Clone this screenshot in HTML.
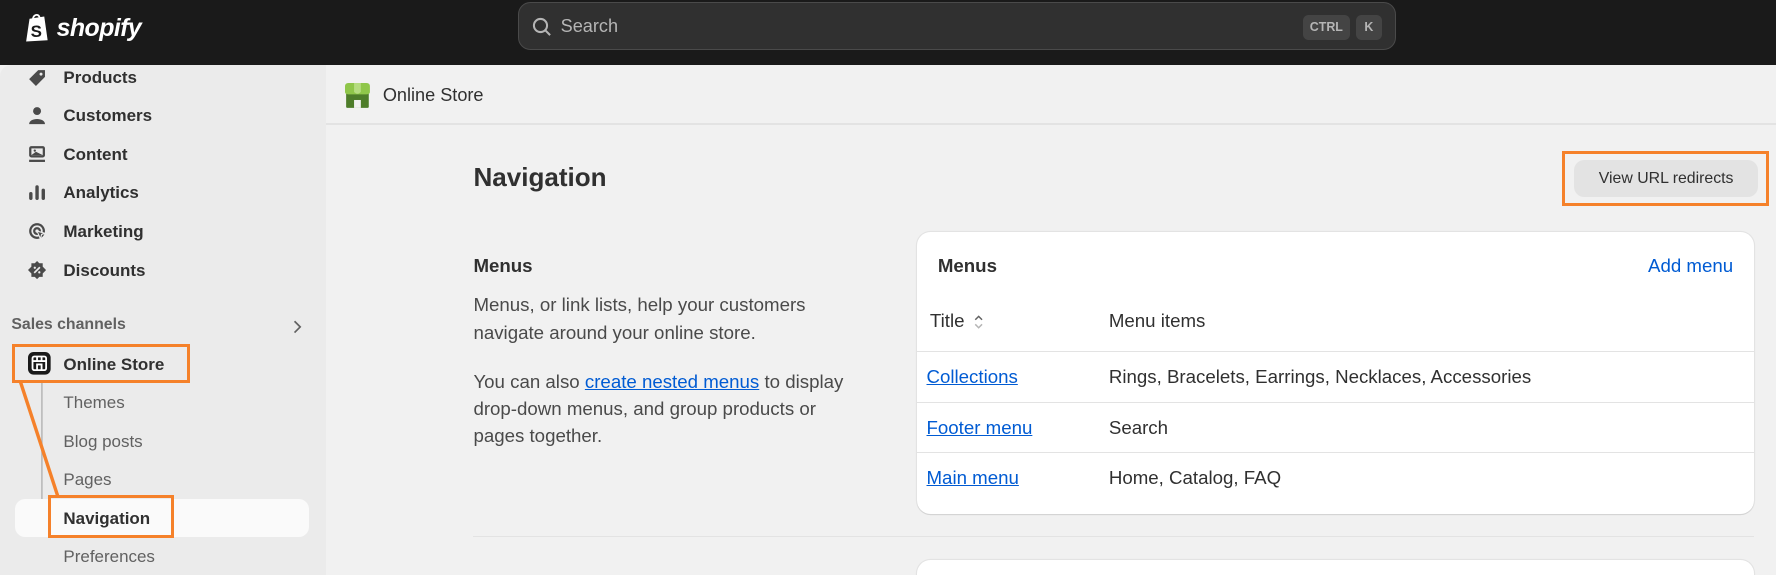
<!DOCTYPE html>
<html><head><meta charset="utf-8"><style>
html,body{margin:0;padding:0;width:1776px;height:575px;overflow:hidden;background:#f1f1f1}
#w{zoom:1.13265;width:1568px;height:508px;position:relative;overflow:hidden;font-family:"Liberation Sans",sans-serif;color:#303030}
.a{position:absolute;white-space:nowrap}
.top{left:0;top:0;width:1568px;height:57px;background:#1a1a1a}
.side{left:0;top:57px;width:288px;height:451px;background:#ebebeb;border-top-left-radius:10px}
.it{font-size:15px;font-weight:bold;color:#303030;left:56px}
.sub{font-size:15px;color:#616161;left:56px}
.ico{left:25px;width:16px;height:16px}
.ob{border:3px solid #f5812a;box-sizing:border-box}
.p{font-size:16.5px;color:#4a4a4a;left:418px}
a{color:#005bd3;text-decoration:underline}
.row{left:810px;width:739px;height:1px;background:#e3e3e3}
.cell{font-size:16.5px;color:#303030}
</style></head><body><div id="w">
<div class="a top"></div>
<svg class="a" style="left:22px;top:11px" width="22" height="27" viewBox="0 0 22 27"><path d="M4 6 L17 4 L20 25 L1 26 Z" fill="#fff"/><path d="M7 7 C7 2 12 1 13 5" stroke="#fff" stroke-width="1.6" fill="none"/><text x="5" y="22" font-size="15" font-weight="bold" fill="#1a1a1a" font-family="Liberation Sans">S</text></svg>
<div class="a" style="left:50px;top:12px;color:#fff;font-size:22px;font-weight:bold;font-style:italic;letter-spacing:-0.5px">shopify</div>
<div class="a" style="left:457px;top:2px;width:774px;height:40px;background:#303030;border:1px solid #4a4a4a;border-radius:11px"></div>
<svg class="a" style="left:470px;top:15px" width="18" height="18" viewBox="0 0 18 18"><circle cx="7.5" cy="7.5" r="5.8" stroke="#b5b5b5" stroke-width="1.8" fill="none"/><path d="M12 12 L16 16" stroke="#b5b5b5" stroke-width="1.8"/></svg>
<div class="a" style="left:495px;top:14px;font-size:16px;color:#b5b5b5">Search</div>
<div class="a" style="left:1150px;top:13px;width:42px;height:22px;background:#444;border-radius:5px;color:#b5b5b5;font-size:11px;font-weight:bold;text-align:center;line-height:22px">CTRL</div>
<div class="a" style="left:1197px;top:13px;width:23px;height:22px;background:#444;border-radius:5px;color:#b5b5b5;font-size:11px;font-weight:bold;text-align:center;line-height:22px">K</div>

<div class="a side"></div>
<svg class="a ico" style="top:61px" viewBox="0 0 16 16"><path d="M9 1 H15 V7 L7 15 L1 9 Z" fill="#4a4a4a" stroke-linejoin="round"/><circle cx="11.5" cy="4.5" r="1.3" fill="#ebebeb"/></svg>
<div class="a it" style="top:60px">Products</div>
<svg class="a ico" style="top:94px" viewBox="0 0 16 16"><circle cx="8" cy="4.5" r="3.5" fill="#4a4a4a"/><path d="M1 16 C1 10 15 10 15 16 Z" fill="#4a4a4a"/></svg>
<div class="a it" style="top:94px">Customers</div>
<svg class="a ico" style="top:128px" viewBox="0 0 16 16"><rect x="1" y="1" width="14" height="10" rx="2" fill="#4a4a4a"/><rect x="3" y="3" width="10" height="6" fill="#ebebeb"/><circle cx="6" cy="5" r="1" fill="#4a4a4a"/><path d="M3 9 L7 6 L13 9 Z" fill="#4a4a4a"/><rect x="1" y="13" width="14" height="2" fill="#4a4a4a"/></svg>
<div class="a it" style="top:128px">Content</div>
<svg class="a ico" style="top:162px" viewBox="0 0 16 16"><rect x="1" y="8" width="3" height="7" rx="1.5" fill="#4a4a4a"/><rect x="6.5" y="2" width="3" height="13" rx="1.5" fill="#4a4a4a"/><rect x="12" y="5" width="3" height="10" rx="1.5" fill="#4a4a4a"/></svg>
<div class="a it" style="top:162px">Analytics</div>
<svg class="a ico" style="top:196px" viewBox="0 0 16 16"><circle cx="8" cy="8" r="6" stroke="#4a4a4a" stroke-width="2" fill="none"/><circle cx="8" cy="8" r="2.5" stroke="#4a4a4a" stroke-width="2" fill="none"/><path d="M8 8 L15 10 L12 11 L11 15 Z" fill="#4a4a4a" stroke="#ebebeb" stroke-width="1"/></svg>
<div class="a it" style="top:196px">Marketing</div>
<svg class="a ico" style="top:230px" viewBox="0 0 16 16"><path d="M8 0 L10 2 L13 2 L13 5 L16 8 L13 11 L13 14 L10 14 L8 16 L6 14 L3 14 L3 11 L0 8 L3 5 L3 2 L6 2 Z" fill="#4a4a4a"/><path d="M5.5 10.5 L10.5 5.5" stroke="#ebebeb" stroke-width="1.5"/><circle cx="6" cy="6" r="1" fill="#ebebeb"/><circle cx="10" cy="10" r="1" fill="#ebebeb"/></svg>
<div class="a it" style="top:230px">Discounts</div>
<div class="a" style="left:10px;top:279px;font-size:14px;font-weight:bold;color:#616161">Sales channels</div>
<svg class="a" style="left:256px;top:282px" width="12" height="14" viewBox="0 0 12 14"><path d="M4 2 L9 7 L4 12" stroke="#616161" stroke-width="1.5" fill="none"/></svg>
<svg class="a" style="left:25px;top:311px" width="20" height="20" viewBox="0 0 20 20"><rect x="0" y="0" width="20" height="20" rx="5" fill="#1a1a1a"/><rect x="4" y="4" width="12" height="12" rx="1.5" stroke="#fff" stroke-width="1.6" fill="none"/><path d="M4 8 H16 M8 4 V8 M12 4 V8 M8 16 V11 H12 V16" stroke="#fff" stroke-width="1.6" fill="none"/></svg>
<div class="a it" style="top:313px">Online Store</div>
<svg class="a" style="left:0;top:300px" width="300" height="200"><path d="M37 37 V151 Q37 158 44 158 H48" stroke="#b5b5b5" stroke-width="1.3" fill="none"/></svg>
<div class="a" style="left:13px;top:441px;width:260px;height:33px;background:#fafafa;border-radius:9px"></div>
<div class="a sub" style="top:347px">Themes</div>
<div class="a sub" style="top:381px">Blog posts</div>
<div class="a sub" style="top:415px">Pages</div>
<div class="a it" style="top:449px">Navigation</div>
<div class="a sub" style="top:483px">Preferences</div>
<div class="a ob" style="left:11px;top:304px;width:157px;height:34px"></div>
<div class="a ob" style="left:42px;top:437px;width:112px;height:38px"></div>
<svg class="a" style="left:0;top:0" width="300" height="508"><path d="M18 337 L51 438" stroke="#f5812a" stroke-width="3"/></svg>

<svg class="a" style="left:305px;top:73px" width="22" height="23" viewBox="0 0 22 23"><rect x="1" y="7" width="20" height="15" rx="1" fill="#4e7d2a"/><path d="M0 3 Q0 0 3 0 H19 Q22 0 22 3 V8 Q22 10 19 10 H3 Q0 10 0 8 Z" fill="#8fc64a"/><path d="M8 0 H14 V8 Q11 11 8 8 Z" fill="#b5dc80"/><rect x="8" y="15" width="6" height="7" fill="#f1f1f1"/></svg>
<div class="a" style="left:338px;top:75px;font-size:16px;color:#303030">Online Store</div>
<div class="a" style="left:288px;top:109px;width:1280px;height:1px;background:#e3e3e3"></div>
<div class="a" style="left:418px;top:143px;font-size:23px;font-weight:bold">Navigation</div>
<div class="a" style="left:1390px;top:141px;width:162px;height:33px;background:#e3e3e3;border-radius:9px;font-size:14px;text-align:center;line-height:33px">View URL redirects</div>
<div class="a ob" style="left:1379px;top:133px;width:183px;height:49px"></div>
<div class="a" style="left:418px;top:225px;font-size:16.5px;font-weight:bold">Menus</div>
<div class="a p" style="top:257px;line-height:25px">Menus, or link lists, help your customers<br>navigate around your online store.</div>
<div class="a p" style="top:325px;line-height:24px">You can also <a>create nested menus</a> to display<br>drop-down menus, and group products or<br>pages together.</div>
<div class="a" style="left:810px;top:205px;width:739px;height:249px;background:#fff;border-radius:12px;box-shadow:0 1px 0 #d4d4d4,0 0 0 1px #e3e3e3"></div>
<div class="a" style="left:828px;top:225px;font-size:16.5px;font-weight:bold">Menus</div>
<div class="a" style="left:1455px;top:225px;font-size:16.5px;color:#005bd3">Add menu</div>
<div class="a cell" style="left:821px;top:274px">Title</div>
<svg class="a" style="left:859px;top:276px" width="10" height="16" viewBox="0 0 10 16"><path d="M2 6 L5 3 L8 6" stroke="#616161" stroke-width="1.3" fill="none"/><path d="M2 10 L5 13 L8 10" stroke="#b5b5b5" stroke-width="1.3" fill="none"/></svg>
<div class="a cell" style="left:979px;top:274px">Menu items</div>
<div class="a row" style="top:310px"></div>
<div class="a row" style="top:355px"></div>
<div class="a row" style="top:399px"></div>
<div class="a cell" style="left:818px;top:323px"><a>Collections</a></div>
<div class="a cell" style="left:979px;top:323px">Rings, Bracelets, Earrings, Necklaces, Accessories</div>
<div class="a cell" style="left:818px;top:368px"><a>Footer menu</a></div>
<div class="a cell" style="left:979px;top:368px">Search</div>
<div class="a cell" style="left:818px;top:412px"><a>Main menu</a></div>
<div class="a cell" style="left:979px;top:412px">Home, Catalog, FAQ</div>
<div class="a" style="left:418px;top:473px;width:1131px;height:1px;background:#e3e3e3"></div>
<div class="a" style="left:810px;top:494px;width:739px;height:40px;background:#fff;border-radius:12px;box-shadow:0 0 0 1px #e3e3e3"></div>
</div></body></html>
